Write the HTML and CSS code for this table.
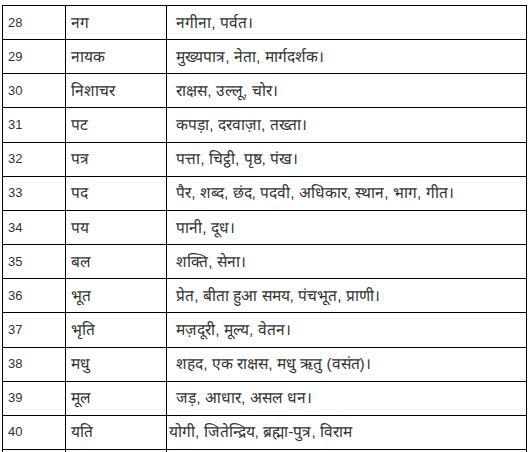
FILE: index.html
```html
<!DOCTYPE html>
<html lang="hi">
<head>
<meta charset="utf-8">
<link rel="stylesheet" href="styles.css">
</head>
<body>
<table class="words">
<colgroup><col class="c-num"><col class="c-word"><col class="c-mean"></colgroup>
<tbody>
<tr><td>28</td><td class="hi">नग</td><td class="hi"> नगीना, पर्वत।</td></tr>
<tr><td>29</td><td class="hi">नायक</td><td class="hi"> मुख्यपात्र, नेता, मार्गदर्शक।</td></tr>
<tr><td>30</td><td class="hi">निशाचर</td><td class="hi"> राक्षस, उल्लू, चोर।</td></tr>
<tr><td>31</td><td class="hi">पट</td><td class="hi"> कपड़ा, दरवाज़ा, तख्ता।</td></tr>
<tr><td>32</td><td class="hi">पत्र</td><td class="hi"> पत्ता, चिट्ठी, पृष्ठ, पंख।</td></tr>
<tr><td>33</td><td class="hi">पद</td><td class="hi"> पैर, शब्द, छंद, पदवी, अधिकार, स्थान, भाग, गीत।</td></tr>
<tr><td>34</td><td class="hi">पय</td><td class="hi"> पानी, दूध।</td></tr>
<tr><td>35</td><td class="hi">बल</td><td class="hi"> शक्ति, सेना।</td></tr>
<tr><td>36</td><td class="hi">भूत</td><td class="hi"> प्रेत, बीता हुआ समय, पंचभूत, प्राणी।</td></tr>
<tr><td>37</td><td class="hi">भृति</td><td class="hi"> मज़दूरी, मूल्य, वेतन।</td></tr>
<tr><td>38</td><td class="hi">मधु</td><td class="hi"> शहद, एक राक्षस, मधु ऋतु (वसंत)।</td></tr>
<tr><td>39</td><td class="hi">मूल</td><td class="hi"> जड़, आधार, असल धन।</td></tr>
<tr><td>40</td><td class="hi">यति</td><td class="hi tight">योगी, जितेन्द्रिय, ब्रह्मा-पुत्र, विराम</td></tr>
<tr><td></td><td></td><td></td></tr>
</tbody>
</table>
</body>
</html>
```

FILE: styles.css
```css
html, body {
  margin: 0;
  padding: 0;
  background: #ffffff;
}

body {
  padding: 5px 0 0 2px;
  font-family: "Liberation Sans", Arial, sans-serif;
  font-size: 13px;
  color: #333333;
}

.words {
  border-collapse: collapse;
  table-layout: fixed;
  width: 524px;
}

.c-num { width: 63px; }
.c-word { width: 101px; }
.c-mean { width: 360px; }

.words tr {
  height: 34.17px;
}

.words td {
  border: 1px solid #000000;
  padding: 0 5px;
  vertical-align: middle;
  white-space: pre;
  line-height: 18px;
}

.words td.hi {
  font-size: 15.5px;
}

.words td.tight {
  padding-left: 2px;
}
```
